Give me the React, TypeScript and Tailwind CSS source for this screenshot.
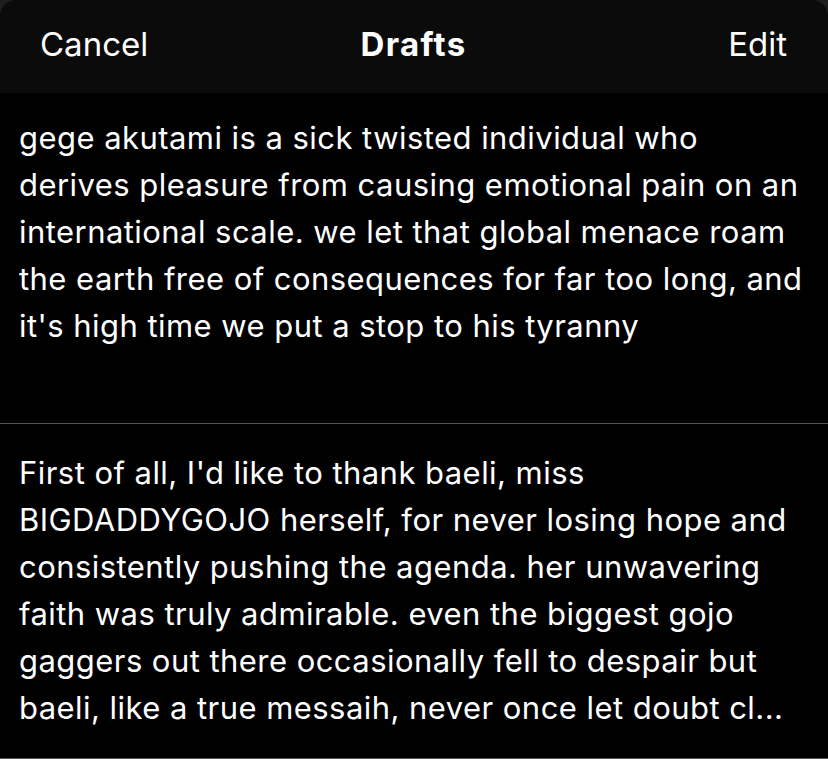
import React from "react";

const font = { fontFamily: "Inter, 'Noto Sans', 'Liberation Sans', sans-serif" };

const first = [
  "gege akutami is a sick twisted individual who",
  "derives pleasure from causing emotional pain on an",
  "international scale. we let that global menace roam",
  "the earth free of consequences for far too long, and",
  "it's high time we put a stop to his tyranny",
];

const second = [
  "First of all, I'd like to thank baeli, miss",
  "BIGDADDYGOJO herself, for never losing hope and",
  "consistently pushing the agenda. her unwavering",
  "faith was truly admirable. even the biggest gojo",
  "gaggers out there occasionally fell to despair but",
  "baeli, like a true messaih, never once let doubt cl...",
];

export default function App() {
  return (
    <div className="w-[828px] h-[759px] bg-[#1e1e1e] overflow-hidden" style={font}>
      <div className="h-[93px] bg-[#0b0b0b] rounded-t-[16px] grid grid-cols-3 items-center pl-[40px] pr-[41px] pb-[3px] text-white text-[33px]">
        <span className="font-normal justify-self-start">Cancel</span>
        <span className="font-bold tracking-[1.3px] justify-self-center">Drafts</span>
        <span className="font-normal justify-self-end">Edit</span>
      </div>
      <div className="bg-black">
        <div className="h-[330px] pl-[19px] pt-[21px] text-white text-[31px] leading-[47px] tracking-[0.45px] whitespace-nowrap">
          {first.map((l, i) => (
            <div key={i}>{l}</div>
          ))}
        </div>
        <div className="h-px bg-[#555555]" />
        <div className="h-[334px] pl-[19px] pt-[25px] text-white text-[31px] leading-[47px] tracking-[0.45px] whitespace-nowrap">
          {second.map((l, i) => (
            <div key={i}>{l}</div>
          ))}
        </div>
        <div className="h-px bg-[#555555]" />
      </div>
    </div>
  );
}
